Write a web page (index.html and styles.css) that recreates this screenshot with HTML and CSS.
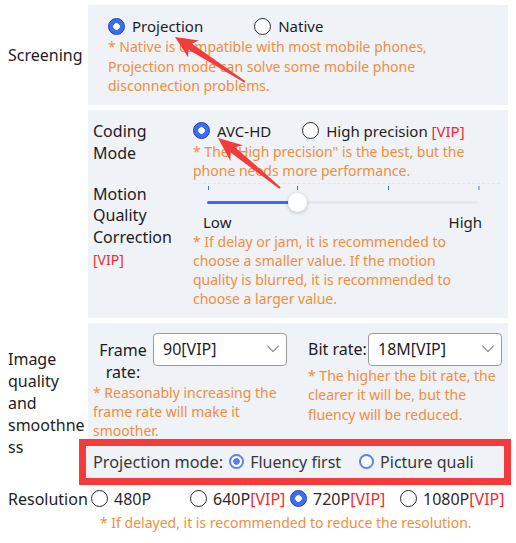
FILE: index.html
```html
<!DOCTYPE html>
<html lang="en">
<head>
<meta charset="utf-8">
<title>Settings</title>
<link rel="stylesheet" href="styles.css">
</head>
<body>
<div class="settings">
  <div class="row">
    <div class="label">Screening</div>
    <div class="panel screen">
      <div class="options">
        <div class="opt"><span class="radio on"></span><span>Projection</span></div>
        <div class="opt"><span class="radio"></span><span>Native</span></div>
      </div>
      <p class="hint big">* Native is compatible with most mobile phones,<br>Projection mode can solve some mobile phone<br>disconnection problems.</p>
    </div>
  </div>

  <div class="row">
    <div class="label"></div>
    <div class="panel coding">
      <div class="sub first">
        <div class="sublabel">Coding<br>Mode</div>
        <div class="subcontent">
          <div class="options gap-coding">
            <div class="opt"><span class="radio on"></span><span>AVC-HD</span></div>
            <div class="opt"><span class="radio"></span><span>High precision <span class="vip">[VIP]</span></span></div>
          </div>
          <p class="hint">* The "High precision" is the best, but the<br>phone needs more performance.</p>
        </div>
      </div>
      <div class="sub second">
        <div class="sublabel">Motion<br>Quality<br>Correction<br><span class="vip small">[VIP]</span></div>
        <div class="subcontent">
          <div class="slider">
            <span class="tick t1"></span><span class="tick t2"></span><span class="tick t3"></span><span class="tick t4"></span>
            <div class="track"><div class="fill"></div></div>
            <span class="thumb"></span>
          </div>
          <div class="ends"><span>Low</span><span>High</span></div>
          <p class="hint">* If delay or jam, it is recommended to<br>choose a smaller value. If the motion<br>quality is blurred, it is recommended to<br>choose a larger value.</p>
        </div>
      </div>
    </div>
  </div>

  <div class="row">
    <div class="label wrap">Image quality and smoothness</div>
    <div class="col">
      <div class="panel quality">
        <div class="group">
          <div class="field frame">
            <div class="flabel">Frame rate:</div>
            <div class="select">90[VIP]<span class="chev"></span></div>
          </div>
          <p class="hint">* Reasonably increasing the<br>frame rate will make it<br>smoother.</p>
        </div>
        <div class="group">
          <div class="field bit">
            <div class="flabel left">Bit rate:</div>
            <div class="select">18M[VIP]<span class="chev"></span></div>
          </div>
          <p class="hint mid">* The higher the bit rate, the<br>clearer it will be, but the<br>fluency will be reduced.</p>
        </div>
      </div>
      <div class="proj">
        <span class="ptitle">Projection mode:</span>
        <div class="popt"><span class="pradio on"></span><span>Fluency first</span></div>
        <div class="popt"><span class="pradio"></span><span>Picture quali</span></div>
      </div>
    </div>
  </div>

  <div class="row res">
    <div class="label top">Resolution</div>
    <div class="rescontent">
      <div class="resopts">
        <div class="opt small-gap"><span class="radio"></span><span>480P</span></div>
        <div class="opt small-gap"><span class="radio"></span><span>640P<span class="vip">[VIP]</span></span></div>
        <div class="opt small-gap"><span class="radio on"></span><span>720P<span class="vip">[VIP]</span></span></div>
        <div class="opt small-gap"><span class="radio"></span><span>1080P<span class="vip">[VIP]</span></span></div>
      </div>
      <p class="hint reshint">* If delayed, it is recommended to reduce the resolution.</p>
    </div>
  </div>
</div>

<svg class="annot" width="516" height="543" viewBox="0 0 516 543" aria-hidden="true">
  <polygon points="175,37 198.9,40.5 192,43.8 245.5,81.2 244.5,82.8 188.2,49.6 188.1,57.3" fill="#f23b3b"/>
  <polygon points="218,138 243,145.3 235,147.2 280.6,187.2 279.4,188.8 230.6,152.6 230.4,160.9" fill="#f23b3b"/>
</svg>
</body>
</html>
```

FILE: styles.css
```css
* { box-sizing: border-box; }

html, body {
  margin: 0;
  background: #ffffff;
}

body {
  position: relative;
  width: 516px;
  height: 543px;
  overflow: hidden;
  font-family: "Noto Sans", "Open Sans", sans-serif;
  font-size: 16px;
  line-height: 22px;
  color: #1d1d1f;
}

.settings {
  display: flex;
  flex-direction: column;
  gap: 5px;
  padding: 5px 8px 0 0;
}

.row {
  display: grid;
  grid-template-columns: 88px 420px;
}

.label {
  padding-left: 8px;
  align-self: center;
}

.label.wrap {
  width: 86px;
  overflow-wrap: break-word;
  margin-bottom: 2px;
}

.label.top { align-self: start; }

.panel { background: #eff2f6; }

.screen { padding: 10px 20px 9px; }

.options {
  display: flex;
  gap: 51px;
  font-size: 15px;
}

.gap-coding { gap: 31px; }

.opt {
  display: flex;
  align-items: center;
  gap: 7px;
  white-space: nowrap;
}

.radio {
  flex: none;
  width: 17px;
  height: 17px;
  border-radius: 50%;
  border: 1px solid #2a2a2a;
  background: #fff;
}

.radio.on {
  border-color: #1f3f94;
  background: radial-gradient(circle, #fff 0 3px, #3a6ef6 3.6px);
}

.vip { color: #f5282f; }
.vip.small { font-size: 14px; line-height: 20px; }

.hint {
  margin: 0;
  font-size: 14px;
  line-height: 19px;
  color: #f28d3c;
}

.hint.big { line-height: 19.5px; }

.hint.mid { line-height: 19.5px; }

/* coding panel */
.coding { padding: 10px 0 10px 5px; }

.sub {
  display: grid;
  grid-template-columns: 80px 1fr;
  gap: 20px;
}

.sub.first { padding-bottom: 3px; }

.sub.second .subcontent { border-top: 1px dashed #e2e6ec; margin-right: 8px; }

.sub.second .sublabel { line-height: 21.7px; padding-top: 1px; }

.slider {
  position: relative;
  height: 29px;
  margin-left: 14px;
  width: 272px;
}

.tick {
  position: absolute;
  top: 2px;
  width: 1px;
  height: 4px;
  background: #3a6ef6;
}
.t1 { left: 1px; }
.t2 { left: 90px; }
.t3 { left: 181px; }
.t4 { left: 271px; width: 2px; background: #9db6f7; }

.track {
  position: absolute;
  left: 0;
  right: 0;
  top: 17px;
  height: 3px;
  background: #e6e9ee;
  border-radius: 2px;
}

.fill {
  width: 90px;
  height: 3px;
  background: #3a6ef6;
  border-radius: 2px;
}

.thumb {
  position: absolute;
  left: 81px;
  top: 9px;
  width: 19px;
  height: 19px;
  border-radius: 50%;
  background: #fff;
  box-shadow: 0 1px 4px rgba(0, 0, 0, 0.22);
}

.ends {
  display: flex;
  justify-content: space-between;
  width: 279px;
  margin-left: 10px;
  font-size: 15px;
  line-height: 19px;
}

/* quality */
.col { display: flex; flex-direction: column; }

.quality {
  display: flex;
  gap: 21px;
  padding: 10px 6px 0 5px;
}

.group { width: 194px; }

.field { display: flex; align-items: flex-start; }
.field.bit { align-items: center; }

.flabel {
  width: 60px;
  flex: none;
  text-align: center;
  margin-top: 6px;
}
.flabel.left { text-align: left; margin-top: 0; }

.select {
  position: relative;
  width: 134px;
  height: 33px;
  flex: none;
  border: 1px solid #9a9a9a;
  border-radius: 4px;
  background: #fff;
  padding-left: 9px;
  line-height: 31px;
  font-size: 16px;
}

.chev {
  position: absolute;
  right: 9px;
  top: 8px;
  width: 8px;
  height: 8px;
  border-right: 1.3px solid #8a8a8a;
  border-bottom: 1.3px solid #8a8a8a;
  transform: rotate(45deg) scale(1.1, 1.1);
}

.proj {
  display: flex;
  align-items: center;
  margin-left: -9px;
  margin-top: -1px;
  width: 432px;
  height: 46px;
  border: 7px solid #f43a3a;
  background: #eff2f6;
  padding-left: 7px;
  color: #383838;
  font-size: 16.3px;
  white-space: nowrap;
  overflow: hidden;
}

.ptitle { margin-right: 6px; }

.popt {
  display: flex;
  align-items: center;
  gap: 6px;
  margin-right: 18px;
  font-size: 16px;
}

.pradio {
  flex: none;
  width: 15px;
  height: 15px;
  border-radius: 50%;
  border: 2px solid #5b80f4;
  background: #fff;
}
.pradio.on {
  background: radial-gradient(circle, #5b80f4 0 3px, #fff 3.6px);
}

/* resolution */
.res { margin-top: -2px; }

.rescontent { padding-left: 3px; }

.resopts {
  display: grid;
  grid-template-columns: 99px 100px 110px auto;
  color: #2a2a2a;
}

.small-gap { gap: 6px; }

.reshint {
  margin-top: 3px;
  padding-left: 9px;
  line-height: 19.5px;
}

.annot {
  position: absolute;
  left: 0;
  top: 0;
  pointer-events: none;
}
```
